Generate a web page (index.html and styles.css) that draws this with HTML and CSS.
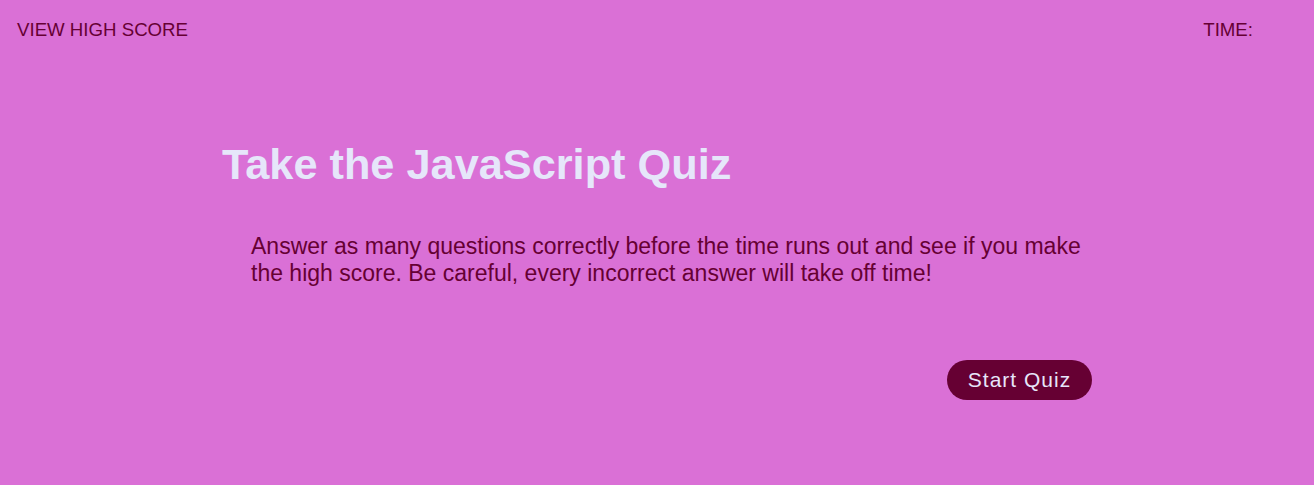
FILE: index.html
```html
<!DOCTYPE html>
<html>
<head>
<meta charset="utf-8">
<link rel="stylesheet" href="styles.css">
</head>
<body>
<header class="top">
  <a class="scores">VIEW HIGH SCORE</a>
  <div class="timer">TIME: <span class="time-val"></span></div>
</header>
<main class="quiz">
  <h1 class="title">Take the JavaScript Quiz</h1>
  <p class="intro">Answer as many questions correctly before the time runs out and see if you make the high score. Be careful, every incorrect answer will take off time!</p>
  <div class="actions">
    <button class="start">Start Quiz</button>
  </div>
</main>
</body>
</html>
```
FILE: styles.css
```css
html, body {
  margin: 0;
  padding: 0;
  background: #da70d6;
  font-family: "Liberation Sans", Arial, sans-serif;
  height: 100%;
}
.top {
  display: flex;
  justify-content: space-between;
  padding: 19px 61px 0 17px;
  font-size: 18.66px;
  color: #660033;
  line-height: 22px;
}
.quiz {
  width: 870px;
  margin: 0 0 0 222px;
}
.title {
  margin: 98px 0 0 0;
  font-size: 43.3px;
  line-height: 50px;
  color: #e6e6fa;
  font-weight: bold;
}
.intro {
  margin: 44px 0 0 29px;
  width: 850px;
  font-size: 23px;
  line-height: 27px;
  color: #660033;
}
.actions {
  display: flex;
  justify-content: flex-end;
  margin-top: 73px;
}
.start {
  width: 145px;
  height: 40px;
  border: none;
  border-radius: 20px;
  background: #660033;
  color: #e6e6fa;
  font-family: "Liberation Sans", Arial, sans-serif;
  font-size: 21px;
  letter-spacing: 1px;
  padding: 0;
}
```
